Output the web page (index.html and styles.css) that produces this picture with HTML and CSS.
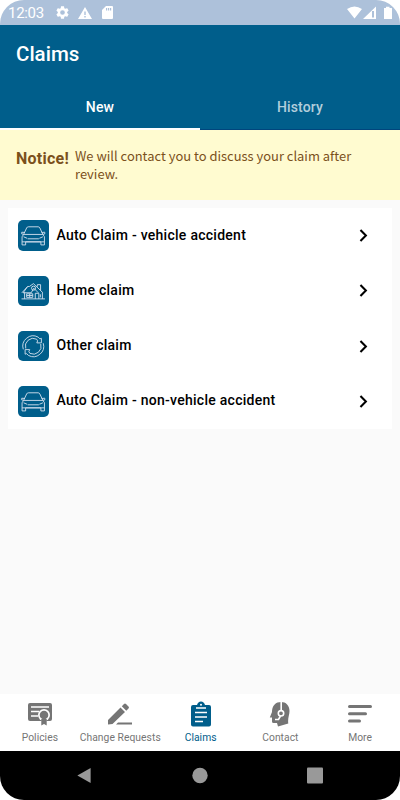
FILE: index.html
```html
<!DOCTYPE html>
<html lang="en">
<head>
<meta charset="utf-8">
<title>Claims</title>
<link rel="stylesheet" href="styles.css">
</head>
<body>
<svg width="0" height="0" class="defs">
  <symbol id="car" viewBox="0 0 30 30"><path d="M5.500 14.200L8.500 7.800Q9 6.700 10.200 6.700H19.800Q21 6.700 21.500 7.800L24.500 14.200M5.500 14.200H24.500M6.800 12.300L3.700 12V13.700L5.500 14.200L4 16.500V24.500H7.500V21.500H22.500V24.500H26V16.500L24.500 14.200L26.300 13.700V12L23.200 12.300M4 21.500H26M9.500 18.500H20.500M5.500 16.500L9 18M24.500 16.500L21 18"/></symbol>
  <symbol id="house" viewBox="0 0 30 30"><path d="M3.500 22.500H26.500M6.500 22.500V16M3.800 16.500L9.500 10.300H11.200L15.200 7.500L24.500 16.500M9.500 10.300L5 16.500H13L15.500 12L20 16.500M19 10.500V8.500H22.200V14M24 16.500V22.500M8.500 17.500H14.500V21H8.500ZM11.500 17.500V21M8.500 19.200H14.500M17 22.500V17H20.500V22.500M22 18V21"/><circle cx="15.300" cy="12" r="2"/></symbol>
  <symbol id="cycle" viewBox="0 0 30 30">
    <path d="M5.200 18A10.200 10.200 0 0 1 19.800 6L21.500 7.700L23 7.200V11.700H18.500L19.300 9.700L18.300 8A7.700 7.700 0 0 0 7.600 17.200"/>
    <path transform="rotate(180 15 15)" d="M5.200 18A10.200 10.200 0 0 1 19.800 6L21.500 7.700L23 7.200V11.700H18.500L19.300 9.700L18.300 8A7.700 7.700 0 0 0 7.600 17.200"/>
  </symbol>
  <symbol id="chevron" viewBox="0 0 8 12"><path d="M1.200 1L6.200 6L1.200 11"/></symbol>
</svg>
<div class="phone">
  <header class="status">
    <span class="time">12:03</span>
    <svg class="gear" viewBox="2 2 20 20"><path d="M19.140 12.940c.04-.3.060-.61.060-.94 0-.32-.02-.64-.07-.94l2.030-1.580c.18-.14.23-.41.12-.61l-1.920-3.320c-.12-.22-.37-.29-.59-.22l-2.390.96c-.5-.38-1.030-.7-1.620-.94l-.36-2.540c-.04-.24-.24-.41-.48-.41h-3.840c-.24 0-.43.17-.47.41l-.36 2.540c-.59.240-1.130.57-1.620.94l-2.390-.96c-.22-.08-.47 0-.59.22L2.740 8.870c-.12.210-.08.47.12.61l2.030 1.580c-.05.3-.09.630-.09.940s.02.640.07.940l-2.030 1.580c-.18.140-.23.410-.12.610l1.920 3.320c.12.220.37.290.59.220l2.390-.96c.5.380 1.030.7 1.620.94l.36 2.540c.05.240.24.410.48.410h3.840c.24 0 .44-.17.47-.41l.36-2.540c.59-.24 1.130-.56 1.620-.94l2.390.96c.22.080.47 0 .59-.22l1.920-3.320c.12-.22.070-.47-.12-.61zM12 15.600A3.600 3.600 0 1 1 12 8.400a3.600 3.600 0 0 1 0 7.200z"/></svg>
    <svg class="warn" viewBox="0 0 14 12"><path fill-rule="evenodd" d="M7 0L14 12H0ZM6.300 4.500V8H7.700V4.500ZM6.300 9V10.400H7.700V9Z"/></svg>
    <svg class="sd" viewBox="0 0 11 13"><path fill-rule="evenodd" d="M4 0H10Q11 0 11 1V12Q11 13 10 13H1Q0 13 0 12V4ZM4 2V4.500H5.200V2ZM6 2V4.500H7.200V2ZM8 2V4.500H9.200V2Z"/></svg>
    <svg class="signals" viewBox="0 0 46 14"><path fill-rule="evenodd" d="M0 3Q7.500-2.200 15 3L7.500 12.500ZM16 13L29 .5V13ZM25 5V11.500H27V5ZM37 2H39V.7H42.500V2H44.500Q45 2 45 2.500V12.500Q45 13 44.500 13H37.500Q37 13 37 12.500Z"/></svg>
  </header>
  <div class="appbar">
    <h1>Claims</h1>
    <nav class="tabs"><a class="active">New</a><a>History</a></nav>
  </div>
  <section class="notice"><strong>Notice!</strong><p>We will contact you to discuss your claim after review.</p></section>
  <main>
    <ul class="card">
      <li><svg class="tile"><use href="#car"/></svg><span>Auto Claim - vehicle accident</span><svg class="chev"><use href="#chevron"/></svg></li>
      <li><svg class="tile"><use href="#house"/></svg><span>Home claim</span><svg class="chev"><use href="#chevron"/></svg></li>
      <li><svg class="tile"><use href="#cycle"/></svg><span>Other claim</span><svg class="chev"><use href="#chevron"/></svg></li>
      <li><svg class="tile"><use href="#car"/></svg><span>Auto Claim - non-vehicle accident</span><svg class="chev"><use href="#chevron"/></svg></li>
    </ul>
  </main>
  <nav class="bottom">
    <a><svg viewBox="0 0 26 26"><path d="M3 2H23Q25 2 25 4V18Q25 20 23 20H3Q1 20 1 18V4Q1 2 3 2Z"/><path class="line" d="M4 6H22M4 10.500H12M4 15H11"/><circle class="halo" cx="17" cy="14" r="6"/><path d="M14.300 18V24.500L17 23L19.700 24.500V18Z"/><circle class="seal" cx="17" cy="14" r="4.300"/></svg><span>Policies</span></a>
    <a><svg viewBox="0 0 26 26"><path d="M1 19L13.500 6.500L18 11L5.500 23L1 23.500ZM14.800 5.200L17 3Q18 2 19 3L21.500 5.500Q22.500 6.500 21.500 7.500L19.300 9.700ZM11 21.500H25V23.500H9Z"/></svg><span>Change Requests</span></a>
    <a class="active"><svg viewBox="0 0 26 26"><path d="M5 4H9Q10 .5 13 .5Q16 .5 17 4H21Q23 4 23 6V23.500Q23 25.500 21 25.500H5Q3 25.500 3 23.500V6Q3 4 5 4Z"/><path class="line" d="M8 7H18M7 11.500H19M7 16H19M7 20.500H15"/><circle cx="13" cy="3.700" r="1" fill="#fff"/></svg><span>Claims</span></a>
    <a><svg viewBox="0 0 26 26"><path d="M10.500 1.500C17-.5 22.500 3 22.500 10C22.500 14 20.500 17 21.300 22.500L11 25.500L10 22H6.500Q5 22 5 20.500V16.500H2.800L5 11C5 6 7.500 2.500 10.500 1.500Z"/><path class="line" d="M14.200 0V9.500M13.500 15L11.500 18.500H8"/><circle class="ring" cx="14" cy="12.300" r="2.700"/></svg><span>Contact</span></a>
    <a><svg viewBox="0 0 26 26"><path class="menu" d="M2.500 5.500H23.500M2.500 12.700H18.500M2.500 19.900H12.500"/></svg><span>More</span></a>
  </nav>
  <footer class="system">
    <svg viewBox="0 0 16 18"><path d="M15 1V17L1 9Z"/></svg>
    <svg viewBox="0 0 16 16"><circle cx="8" cy="8" r="7.700"/></svg>
    <svg viewBox="0 0 16 16"><rect width="16" height="16" rx="1"/></svg>
  </footer>
</div>
</body>
</html>
```
FILE: styles.css
```css
* { box-sizing: border-box; }
body { margin: 0; background: #fff; font-family: Roboto, sans-serif; }
.defs { position: absolute; }
.phone { width: 400px; height: 800px; display: flex; flex-direction: column; background: #fafafa; border-radius: 24px; overflow: hidden; }
.status { height: 25px; flex: none; display: flex; align-items: center; padding: 0 8px; background: #adc1da; color: #fff; }
.status svg { fill: #fff; flex: none; }
.time { font-size: 15px; line-height: 25px; width: 36px; letter-spacing: -.3px; padding-top: 1px; }
.gear { width: 13px; height: 13px; margin-left: 12px; }
.warn { width: 14px; height: 12px; margin-left: 9px; }
.sd { width: 11px; height: 13px; margin-left: 10px; }
.signals { width: 46px; height: 14px; margin-left: auto; margin-right: -1px; }
.appbar { height: 105px; flex: none; display: flex; flex-direction: column; justify-content: space-between; background: #005e8b; color: #fff; }
h1 { margin: 14px 16px 0; font-size: 20.500px; line-height: 30px; font-weight: 500; }
.tabs { display: grid; grid-template-columns: 1fr 1fr; height: 48px; font-size: 14px; font-weight: 500; text-align: center; line-height: 50px; letter-spacing: .15px; }
.tabs a { height: 48px; border-bottom: 1px solid #00457d; color: #b2cedc; }
.tabs .active { color: #fff; border-bottom: 2px solid #fff; }
.notice { height: 70px; flex: none; display: flex; gap: 6px; padding: 17px 36px 0 16px; background: #fffbd0; color: #7b501b; }
.notice strong { font-size: 16px; line-height: 23px; font-weight: 700; width: 53px; letter-spacing: .25px; }
.notice p { margin: 0; flex: 1; font: 12.950px/18px "Noto Sans CJK SC", sans-serif; }
main { flex: 1; padding: 8px; }
.card { margin: 0; padding: 0; list-style: none; background: #fff; }
.card li { height: 55.250px; display: flex; align-items: center; padding: 0 24px 0 10px; font-size: 14px; font-weight: 500; letter-spacing: .27px; color: #000; }
.card span { flex: 1; margin-left: 8px; padding-bottom: 2px; }
.tile { width: 30.500px; height: 30.500px; background: #005e8b; border-radius: 5px; fill: none; stroke: #d2dfed; stroke-width: .9; }
.chev { width: 9px; height: 13px; fill: none; stroke: #000; stroke-width: 1.900; }
.bottom { height: 57px; flex: none; display: grid; grid-template-columns: repeat(5, 1fr); background: #fff; }
.bottom a { display: flex; flex-direction: column; align-items: center; padding-top: 7px; color: #757575; font-size: 10.300px; white-space: nowrap; }
.bottom svg { width: 26px; height: 26px; fill: currentColor; }
.bottom span { line-height: 14px; margin-top: 4px; letter-spacing: .05px; }
.bottom .active { color: #005e8b; }
.bottom .line, .bottom .ring { fill: none; stroke: #fff; stroke-width: 1.600; }
.bottom .halo { fill: #fff; }
.bottom .seal { fill: #757575; }
.bottom .menu { fill: none; stroke: currentColor; stroke-width: 3; stroke-linecap: round; }
.system { height: 49px; flex: none; display: flex; justify-content: space-between; align-items: center; padding: 0 77px 0 76px; background: #000; }
.system svg { width: 16px; height: 17px; fill: #999; }
```
